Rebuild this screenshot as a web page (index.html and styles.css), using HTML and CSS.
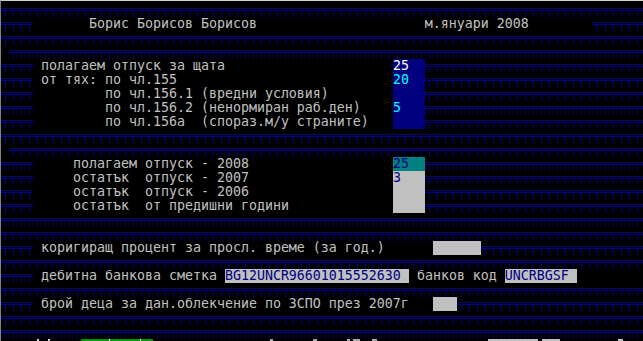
FILE: index.html
```html
<!DOCTYPE html>
<html lang="bg">
<head>
<meta charset="utf-8">
<title>Отпуски</title>
<link rel="stylesheet" href="styles.css">
</head>
<body>
<div class="screen">
  <div class="row"><span class="pat fill"></span></div>
  <div class="row"><span class="pat w4"></span><span class="blk w70">       Борис Борисов Борисов                     м.януари 2008</span><span class="pat fill"></span></div>
  <div class="row"><span class="pat fill"></span></div>
  <div class="row"><span class="blk w1"></span><span class="pat fill"></span></div>

  <div class="row"><span class="pat w4"></span><span class="blk w45"> полагаем отпуск за щата</span><span class="fld blue w4 hi">25</span><span class="pat fill"></span></div>
  <div class="row"><span class="pat w4"></span><span class="blk w45"> от тях: по чл.155</span><span class="fld blue w4 cy">20</span><span class="pat fill"></span></div>
  <div class="row"><span class="pat w4"></span><span class="blk w45">         по чл.156.1 (вредни условия)</span><span class="fld blue w4"></span><span class="pat fill"></span></div>
  <div class="row"><span class="pat w4"></span><span class="blk w45">         по чл.156.2 (ненормиран раб.ден)</span><span class="fld blue w4 cy">5</span><span class="pat fill"></span></div>
  <div class="row"><span class="pat w4"></span><span class="blk w45">         по чл.156а  (спораз.м/у страните)</span><span class="fld blue w4"></span><span class="pat fill"></span></div>

  <div class="row"><span class="pat fill"></span></div>
  <div class="row"><span class="blk w1"></span><span class="pat fill"></span></div>

  <div class="row"><span class="pat w4"></span><span class="blk w45">     полагаем отпуск - 2008</span><span class="fld teal w4">25</span><span class="pat fill"></span></div>
  <div class="row"><span class="pat w4"></span><span class="blk w45">     остатък  отпуск - 2007</span><span class="fld gray w4">3</span><span class="pat fill"></span></div>
  <div class="row"><span class="pat w4"></span><span class="blk w45">     остатък  отпуск - 2006</span><span class="fld gray w4"></span><span class="pat fill"></span></div>
  <div class="row"><span class="pat w4"></span><span class="blk w45">     остатък  от предишни години</span><span class="fld gray w4"></span><span class="pat fill"></span></div>

  <div class="row"><span class="pat fill"></span></div>
  <div class="row"><span class="pat fill"></span></div>

  <div class="row"><span class="pat w4"></span><span class="blk w50"> коригиращ процент за просл. време (за год.)</span><span class="fld gray w6"></span><span class="pat fill"></span></div>
  <div class="row"><span class="pat fill"></span></div>
  <div class="row"><span class="pat w4"></span><span class="blk"> дебитна банкова сметка </span><span class="fld gray w23">BG12UNCR96601015552630</span><span class="blk"> банков код </span><span class="fld gray w9">UNCRBGSF</span><span class="blk fill"></span></div>
  <div class="row"><span class="pat fill"></span></div>
  <div class="row"><span class="pat w4"></span><span class="blk w50"> брой деца за дан.облекчение по ЗСПО през 2007г</span><span class="fld gray w3"></span><span class="pat fill"></span></div>
  <div class="row"><span class="pat fill"></span></div>
  <div class="row"><span class="pat fill"></span></div>
  <div class="row status"></div>
</div>
</body>
</html>
```
FILE: styles.css
```css
html, body {
  margin: 0;
  padding: 0;
  background: #000;
  overflow: hidden;
}

.screen {
  height: 338px;
  padding-top: 2px;
  border-top: 1px solid #d4d0c8;
  border-left: 1px solid #808080;
  overflow: hidden;
  font-family: "DejaVu Sans Mono", monospace;
  font-size: 13.29px;
  line-height: 14px;
  color: #c0c0c0;
}

.row {
  display: flex;
  height: 14px;
  white-space: pre;
}

.row > span {
  flex: none;
  height: 14px;
  overflow: hidden;
}

.row > .fill {
  flex: 1 1 auto;
}

.pat {
  background-color: #000;
  background-image:
    linear-gradient(#000080, #000080),
    linear-gradient(#000080, #000080),
    linear-gradient(to right, transparent 4px, #000080 4px, #000080 5px, transparent 5px);
  background-size: 100% 1px, 100% 1px, 8px 6px;
  background-position: 0 5px, 0 7px, 0 8px;
  background-repeat: no-repeat, no-repeat, repeat-x;
}

.blk { background: #000; }

.w1 { width: 8px; }
.w3 { width: 24px; }
.w4 { width: 32px; }
.w6 { width: 48px; }
.w9 { width: 72px; }
.w23 { width: 184px; }
.w45 { width: 360px; }
.w50 { width: 400px; }
.w70 { width: 560px; }

.fld.blue { background: #000080; }
.fld.teal { background: #008080; color: #000080; }
.fld.gray { background: #c0c0c0; color: #000080; }
.hi { color: #ffffff; }
.cy { color: #00ffff; }

.status {
  background: linear-gradient(to right,
    #000 0 36px, #d0d0d0 36px 38px, #000 38px 47px, #d0d0d0 47px 49px,
    #000 49px 80px, #009900 80px 108px, #ffffff 108px 109px, #009900 109px 139px,
    #ffffff 139px 140px, #009900 140px 152px, #000 152px 269px,
    #a8a8a8 269px 272px, #000 272px 312px, #a8a8a8 312px 316px, #000 316px 346px,
    #a8a8a8 346px 349px, #000 349px 352px, #a8a8a8 352px 359px, #000 359px 371px,
    #a8a8a8 371px 376px, #000 376px 487px, #c0c0c0 487px 537px, #000 537px 541px,
    #c0c0c0 541px 559px, #000 559px 617px, #c0c0c0 617px 622px, #000 622px);
}
```
